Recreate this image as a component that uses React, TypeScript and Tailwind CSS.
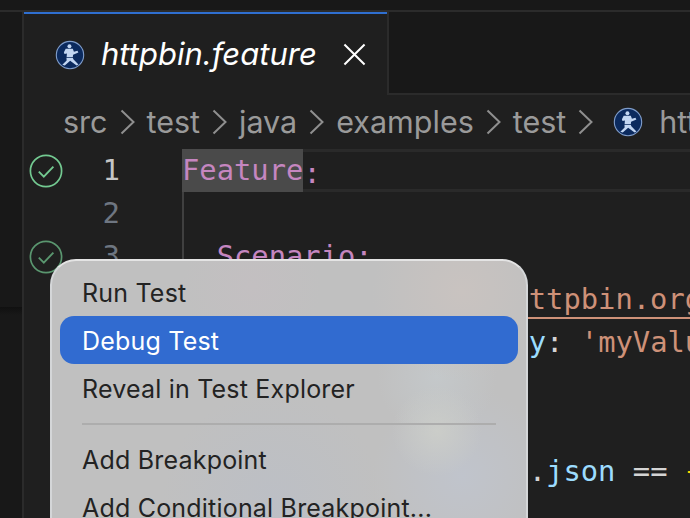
import type { ReactNode } from 'react';

const mono = 'font-["DejaVu_Sans_Mono",monospace] text-[28.8px] leading-[43px] whitespace-pre';

function KarateIcon({ className }: { className: string }) {
  return (
    <svg viewBox="0 0 32 32" className={className}>
      <circle cx="16" cy="16" r="14.6" fill="#0b2a5e" stroke="#7f9cc9" strokeWidth="1.2" />
      <circle cx="15.4" cy="6.6" r="2.1" fill="#c2d6f2" />
      <path d="M11.4 9.4h7.6l1.2 3 3.8-1 0.9 2-5.6 2.4-0.3 2.2h-6.6l0.3-3.6-2.6 0.6-0.6-2z" fill="#c2d6f2" />
      <path d="M12.2 18.8h6.8l0.6 1.8 5.4 5.6-2 1-6.8-5-5.8 5-2.6-0.8 4.6-4.6z" fill="#c2d6f2" />
    </svg>
  );
}

function CheckBadge({ dim }: { dim?: boolean }) {
  return (
    <svg viewBox="0 0 34 34" className={dim ? 'h-[34px] w-[34px] opacity-70' : 'h-[34px] w-[34px]'}>
      <circle cx="17" cy="17" r="15.6" fill="none" stroke="#73c991" strokeWidth="1.7" />
      <path d="M9.8 17.6l5 5 9.6-10" fill="none" stroke="#73c991" strokeWidth="1.9" />
    </svg>
  );
}

function Chevron() {
  return (
    <svg viewBox="0 0 15 26" className="h-[26px] w-[15px]">
      <path d="M1.5 1.5L13.5 13 1.5 24.5" fill="none" stroke="#8f8f8f" strokeWidth="2" />
    </svg>
  );
}

type LineProps = {
  no: number;
  check?: 'on' | 'dim';
  active?: boolean;
  children?: ReactNode;
};

function Line({ no, check, active, children }: LineProps) {
  return (
    <div className="flex h-[43px]">
      <div className="flex w-[39px] shrink-0 items-center justify-end">{check && <CheckBadge dim={check === 'dim'} />}</div>
      <div
        className={`w-[57px] shrink-0 text-right font-["DejaVu_Sans_Mono",monospace] text-[29px] leading-[43px] ${
          active ? 'text-[#c6c6c6]' : 'text-[#6e7681]'
        }`}
      >
        {no}
      </div>
      <div className="w-[62px] shrink-0" />
      {children}
    </div>
  );
}

function CodeCell({ children }: { children?: ReactNode }) {
  return (
    <div className="flex-1 border-l-2 border-[#404040]">
      <div className={`-ml-[2px] ${mono}`}>{children}</div>
    </div>
  );
}

function MenuItem({ label, selected }: { label: string; selected?: boolean }) {
  return (
    <div
      className={`flex h-[48px] items-center rounded-[14px] px-[22px] pt-[3px] text-[25px] tracking-[0.2px] ${
        selected ? 'bg-[#316bd0] text-white' : 'text-[#232323]'
      }`}
    >
      {label}
    </div>
  );
}

const crumbs = ['src', 'test', 'java', 'examples', 'test'];

export default function App() {
  return (
    <div className='relative flex h-[518px] w-[690px] flex-col overflow-hidden bg-[#181818] font-["Inter",sans-serif]'>
      <div className="h-[12px] shrink-0 border-b-2 border-[#2b2b2b]" />

      <div className="flex min-h-0 flex-1">
        <aside className="w-[24px] shrink-0 border-r-2 border-[#2b2b2b]">
          <div className="mt-[295px] h-[8px] bg-gradient-to-b from-[#101010] to-[#181818]" />
        </aside>

        <main className="flex min-w-0 flex-1 flex-col">
          <div className="flex h-[83px] shrink-0">
            <div className="flex w-[363px] shrink-0 items-center border-t-2 border-[#2f6fd0] bg-[#1f1f1f] pl-[31px]">
              <KarateIcon className="h-[30px] w-[30px]" />
              <span className="ml-[16px] text-[31px] italic text-white">httpbin.feature</span>
              <svg viewBox="0 0 24 24" className="ml-[26px] h-[23px] w-[23px]">
                <path d="M1.5 1.5l21 21M22.5 1.5l-21 21" stroke="#ffffff" strokeWidth="2.1" fill="none" />
              </svg>
            </div>
            <div className="flex-1 border-b-2 border-l-2 border-[#2b2b2b]" />
          </div>

          <div className="flex min-h-0 flex-1 flex-col bg-[#1f1f1f]">
            <div className="flex h-[54px] shrink-0 items-center gap-[12px] pl-[39px] text-[30.5px] text-[#9a9a9a]">
              {crumbs.map((crumb, index) => (
                <div key={index} className="flex items-center gap-[12px]">
                  <span>{crumb}</span>
                  <Chevron />
                </div>
              ))}
              <KarateIcon className="ml-[8px] h-[30px] w-[30px] shrink-0" />
              <span className="ml-[4px] whitespace-nowrap">httpbin.feature</span>
            </div>

            <Line no={1} check="on" active>
              <div className="flex flex-1">
                <span className={`bg-[#4a4a4a] text-[#c586c0] ${mono}`}>Feature</span>
                <div className={`flex-1 border-y-[3px] border-[#2a2a2a] text-[#c586c0] ${mono} leading-[37px]`}>:</div>
              </div>
            </Line>
            <Line no={2}>
              <CodeCell />
            </Line>
            <Line no={3} check="dim">
              <CodeCell>
                <span className="text-[#c586c0]">  Scenario:</span>
              </CodeCell>
            </Line>
            <Line no={4}>
              <CodeCell>
                <span className="text-[#c586c0]">    * </span>
                <span className="text-[#dcdcaa]">url </span>
                <span className="text-[#ce9178] underline decoration-2 underline-offset-[8px]">'https://httpbin.org'</span>
              </CodeCell>
            </Line>
            <Line no={5}>
              <CodeCell>
                <span className="text-[#c586c0]">    * </span>
                <span className="text-[#dcdcaa]">request </span>
                <span className="text-[#ffd700]">{'{ '}</span>
                <span className="text-[#9cdcfe]">myKey</span>
                <span className="text-[#d4d4d4]">: </span>
                <span className="text-[#ce9178]">'myValue'</span>
              </CodeCell>
            </Line>
            <Line no={6}>
              <CodeCell />
            </Line>
            <Line no={7}>
              <CodeCell>
                <span className="text-[#c586c0]">    * </span>
                <span className="text-[#dcdcaa]">method get</span>
              </CodeCell>
            </Line>
            <Line no={8}>
              <CodeCell>
                <span className="text-[#c586c0]">    * </span>
                <span className="text-[#dcdcaa]">match </span>
                <span className="text-[#9cdcfe]">response</span>
                <span className="text-[#d4d4d4]">.</span>
                <span className="text-[#9cdcfe]">json</span>
                <span className="text-[#d4d4d4]"> == </span>
                <span className="text-[#ffd700]">{'{'}</span>
              </CodeCell>
            </Line>
          </div>
        </main>
      </div>

      <div className="absolute top-[259px] left-[50px] h-[300px] w-[478px] rounded-[26px] border-2 border-[#d4d6d8] border-t-[#e4e4e4] bg-[#c0c0c0] bg-[radial-gradient(circle_at_410px_30px,#c9c3c0_0,transparent_90px),radial-gradient(circle_at_200px_25px,#c3bfc1_0,transparent_70px),radial-gradient(circle_at_385px_170px,#cbcdc9_0,transparent_45px),radial-gradient(circle_at_385px_115px,#c4c8ca_0,transparent_60px),radial-gradient(circle_at_410px_215px,#c0c4cc_0,transparent_90px),radial-gradient(circle_at_220px_240px,#bcbfc5_0,transparent_110px)] px-[8px] pt-[7px]">
        <MenuItem label="Run Test" />
        <MenuItem label="Debug Test" selected />
        <MenuItem label="Reveal in Test Explorer" />
        <div className="mx-[22px] mt-[11px] mb-[10px] h-[2px] bg-[#adadad]" />
        <MenuItem label="Add Breakpoint" />
        <MenuItem label="Add Conditional Breakpoint..." />
      </div>
    </div>
  );
}
